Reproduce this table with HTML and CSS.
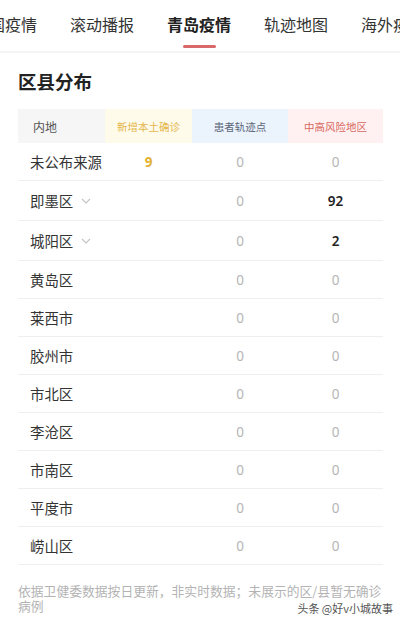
FILE: index.html
```html
<!DOCTYPE html>
<html lang="zh">
<head>
<meta charset="utf-8">
<link rel="stylesheet" href="styles.css">
</head>
<body>
<nav class="tabs">
  <span class="tab">全国疫情</span>
  <span class="tab">滚动播报</span>
  <span class="tab active">青岛疫情</span>
  <span class="tab">轨迹地图</span>
  <span class="tab">海外疫情</span>
</nav>
<div class="divider"></div>
<main class="content">
  <h2 class="title">区县分布</h2>
  <div class="table">
    <div class="row head">
      <div class="c c1">内地</div>
      <div class="c c2">新增本土确诊</div>
      <div class="c c3">患者轨迹点</div>
      <div class="c c4">中高风险地区</div>
    </div>
    <div class="row">
      <div class="c name">未公布来源</div>
      <div class="c num gold">9</div>
      <div class="c num">0</div>
      <div class="c num">0</div>
    </div>
    <div class="row tall">
      <div class="c name">即墨区<svg class="chev" width="10" height="6" viewBox="0 0 10 6"><polyline points="1,1 5,5 9,1" fill="none" stroke="#c4c4c4" stroke-width="1.2"/></svg></div>
      <div class="c num"></div>
      <div class="c num">0</div>
      <div class="c num strong">92</div>
    </div>
    <div class="row tall">
      <div class="c name">城阳区<svg class="chev" width="10" height="6" viewBox="0 0 10 6"><polyline points="1,1 5,5 9,1" fill="none" stroke="#c4c4c4" stroke-width="1.2"/></svg></div>
      <div class="c num"></div>
      <div class="c num">0</div>
      <div class="c num strong">2</div>
    </div>
    <div class="row"><div class="c name">黄岛区</div><div class="c num"></div><div class="c num">0</div><div class="c num">0</div></div>
    <div class="row"><div class="c name">莱西市</div><div class="c num"></div><div class="c num">0</div><div class="c num">0</div></div>
    <div class="row"><div class="c name">胶州市</div><div class="c num"></div><div class="c num">0</div><div class="c num">0</div></div>
    <div class="row"><div class="c name">市北区</div><div class="c num"></div><div class="c num">0</div><div class="c num">0</div></div>
    <div class="row"><div class="c name">李沧区</div><div class="c num"></div><div class="c num">0</div><div class="c num">0</div></div>
    <div class="row"><div class="c name">市南区</div><div class="c num"></div><div class="c num">0</div><div class="c num">0</div></div>
    <div class="row"><div class="c name">平度市</div><div class="c num"></div><div class="c num">0</div><div class="c num">0</div></div>
    <div class="row"><div class="c name">崂山区</div><div class="c num"></div><div class="c num">0</div><div class="c num">0</div></div>
  </div>
  <p class="note">依据卫健委数据按日更新，非实时数据；未展示的区/县暂无确诊病例</p>
</main>
<div class="watermark">头条 @好v小城故事</div>
</body>
</html>
```
FILE: styles.css
```css
* { box-sizing: border-box; }
html, body {
  margin: 0;
  padding: 0;
  background: #fff;
  font-family: "Noto Sans CJK SC", "Noto Sans", sans-serif;
  color: #333;
  overflow: hidden;
}
body { width: 400px; height: 623px; position: relative; }

.tabs {
  display: flex;
  gap: 33px;
  height: 51px;
  margin-left: -27px;
  white-space: nowrap;
  padding-top: 12px;
}
.tab {
  flex: none;
  position: relative;
  font-size: 16px;
  line-height: 24px;
  color: #333;
  width: 64px;
}
.tab.active {
  font-weight: 700;
  color: #222;
}
.tab.active::after {
  content: "";
  position: absolute;
  left: 16px;
  top: 33px;
  width: 33px;
  height: 3px;
  border-radius: 2px;
  background: #d9686b;
}
.divider {
  height: 2px;
  background: #f5f5f5;
}

.content { padding: 0 17px 0 18px; }
.title {
  margin: 0;
  padding-top: 15px;
  font-size: 18.5px;
  line-height: 26px;
  font-weight: 700;
  color: #222;
  height: 56px;
}

.table { width: 365px; }
.row {
  display: grid;
  grid-template-columns: 87px 87px 96px 95px;
  height: 38px;
  border-bottom: 1px solid #efefef;
  align-items: center;
}
.row.tall { height: 40px; }
.row.head {
  height: 34px;
  border-bottom: none;
  align-items: stretch;
}
.head .c {
  display: flex;
  align-items: center;
  justify-content: center;
  font-size: 10.5px;
}
.head .c1 {
  justify-content: flex-start;
  padding-left: 15px;
  font-size: 12px;
  background: #f6f6f6;
  color: #555;
}
.head .c2 { background: #fffbeb; color: #e3b64a; }
.head .c3 { background: #ebf3fd; color: #5c6677; }
.head .c4 { background: #fff1f1; color: #d9685e; }

.name {
  padding-left: 12px;
  font-size: 14.4px;
  color: #333;
  display: flex;
  align-items: center;
  white-space: nowrap;
}
.chev { margin-left: 8px; margin-top: 1px; }
.num {
  text-align: center;
  font-size: 13.5px;
  color: #b5b5b5;
  font-family: "Noto Sans", sans-serif;
}
.num.gold { color: #e2b232; font-weight: 700; }
.num.strong { color: #222; font-weight: 600; }

.note {
  margin: 18px 0 0;
  font-size: 12.8px;
  line-height: 15px;
  color: #b3b3b3;
  width: 368px;
}

.watermark {
  position: absolute;
  right: 7px;
  top: 601px;
  font-size: 11px;
  line-height: 14px;
  color: #555;
  text-shadow: 0 0 2px #fff, 0 0 2px #fff;
}
```
